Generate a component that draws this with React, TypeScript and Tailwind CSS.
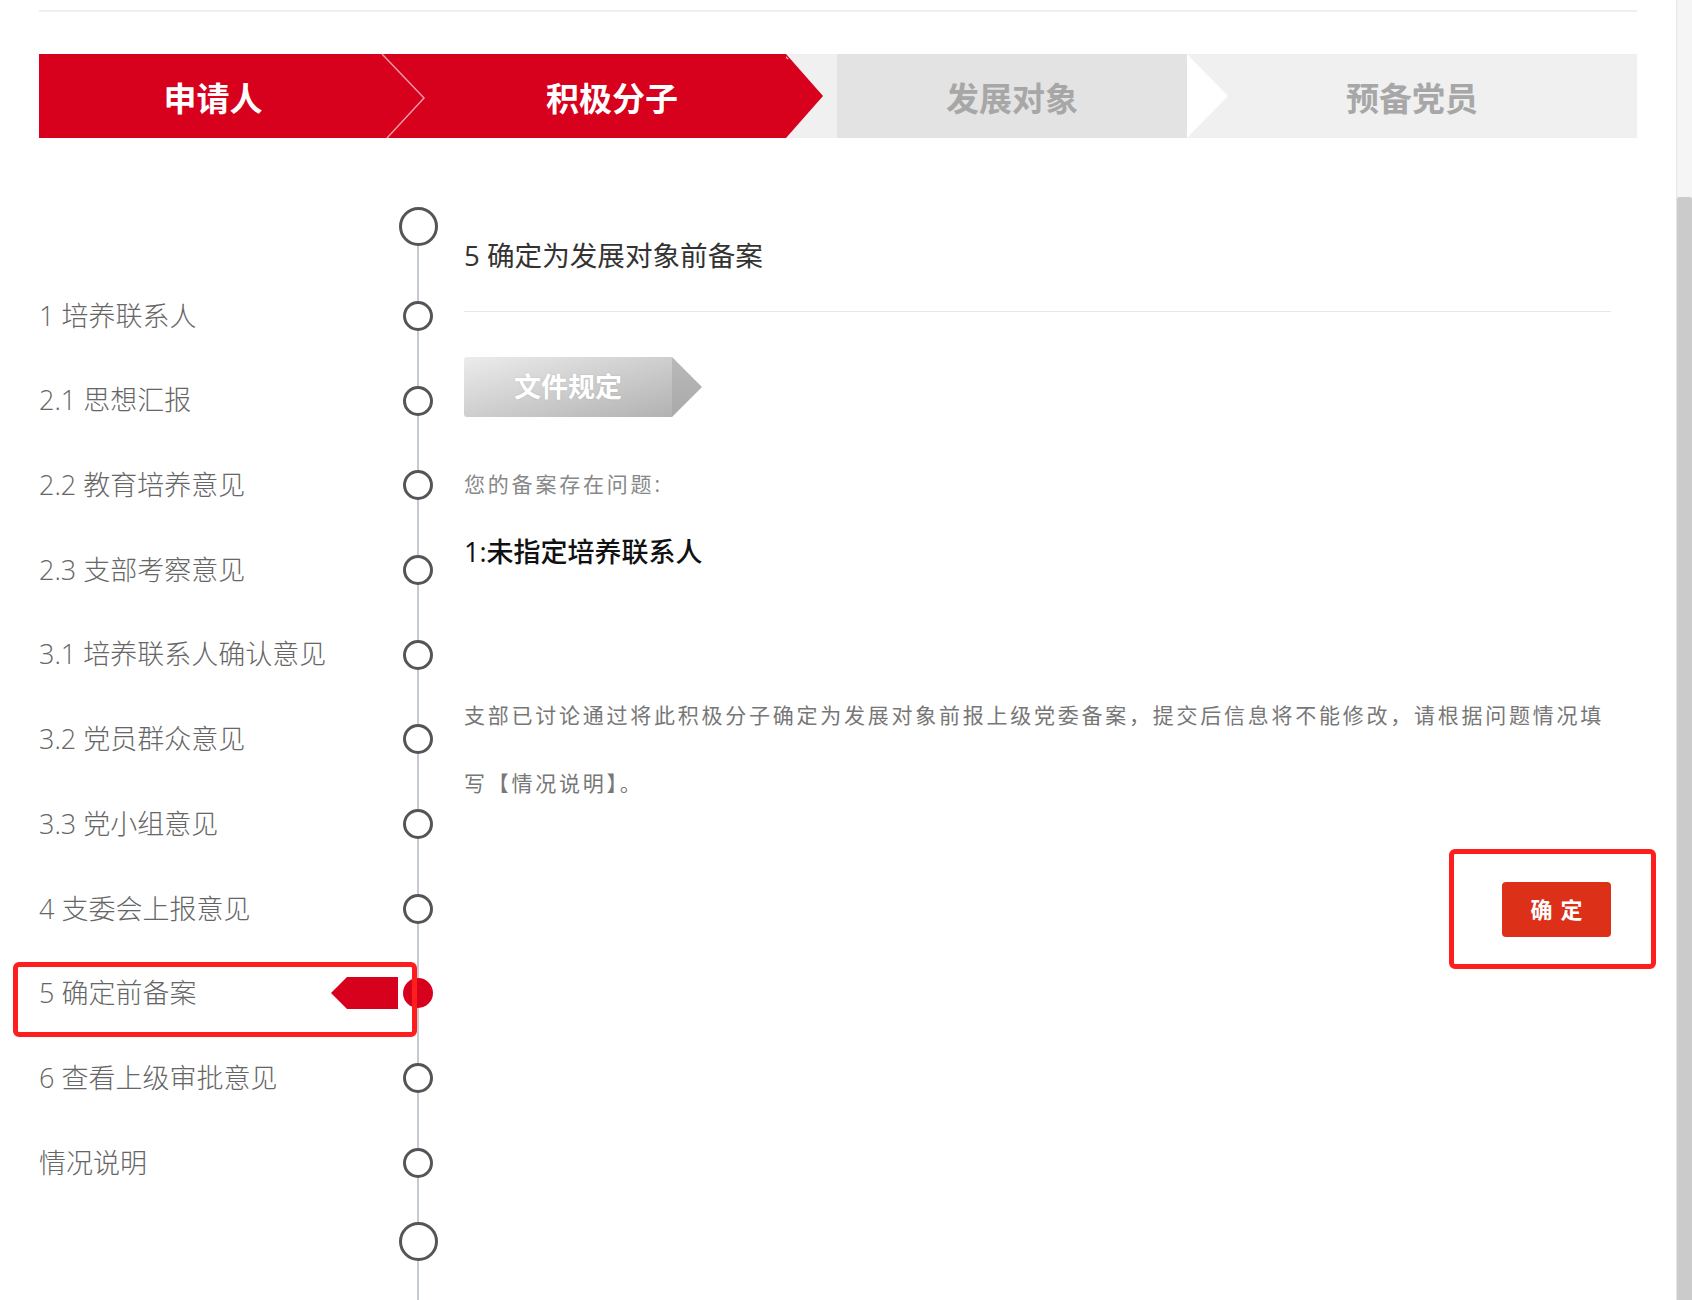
import React from "react";

const steps = [
  "1 培养联系人",
  "2.1 思想汇报",
  "2.2 教育培养意见",
  "2.3 支部考察意见",
  "3.1 培养联系人确认意见",
  "3.2 党员群众意见",
  "3.3 党小组意见",
  "4 支委会上报意见",
  "5 确定前备案",
  "6 查看上级审批意见",
  "情况说明",
];
const activeIndex = 8;

// vertical timeline stripe, drawn as a background of the circle cell
const line =
  "bg-[linear-gradient(90deg,transparent_19px,#c6cad3_19px,#c6cad3_21px,transparent_21px)]";

const StageBar = () => {
  return (
    <div className="mt-[42px] flex h-[84px] bg-[#f0f0f0] pt-[4px] text-[33px] font-bold leading-none">
      <div className="-mt-[4px] flex w-[342px] items-center justify-center bg-[#d7001d] pl-[6px] pt-[4px] text-white">
        申请人
      </div>
      <div className="relative -mt-[4px] flex w-[405px] items-center justify-center bg-[#d7001d] pl-[57px] pt-[4px] text-white">
        <svg className="absolute left-0 top-0 h-[84px] w-[46px]" viewBox="0 0 46 84">
          <polyline points="1,0 43,44 6,84" fill="none" stroke="#f29aa4" strokeWidth="1.5" />
        </svg>
        积极分子
        <svg className="absolute left-full top-0 h-[84px] w-[38px]" viewBox="0 0 38 84">
          <polygon points="0,0 37,42 0,84" fill="#d7001d" />
          <polyline points="-3,0 2,5" fill="none" stroke="#f6c3c8" strokeWidth="1.2" />
        </svg>
      </div>
      <div className="w-[51px]" />
      <div className="-mt-[4px] flex w-[350px] items-center justify-center bg-[#e3e3e3] pt-[4px] text-[#a7a7a7]">
        发展对象
      </div>
      <div className="relative -mt-[4px] flex flex-1 items-center justify-center pt-[4px] text-[#a7a7a7]">
        <svg className="absolute left-0 top-0 h-[84px] w-[42px]" viewBox="0 0 42 84">
          <polygon points="0,0 41,42 0,84" fill="#ffffff" />
        </svg>
        预备党员
      </div>
    </div>
  );
};

const Circle = ({ big = false }: { big?: boolean }) => (
  <div
    className={
      big
        ? "h-[39px] w-[39px] rounded-full border-[3px] border-[#555] bg-white"
        : "h-[30px] w-[30px] rounded-full border-[3px] border-[#555] bg-white"
    }
  />
);

const Timeline = () => {
  return (
    <div className="flex w-[399px] flex-col pt-[69px]">
      {/* top end */}
      <div className="flex h-[39px]">
        <div className="flex-1" />
        <div className="flex w-[40px] items-center justify-center">
          <Circle big />
        </div>
      </div>
      <div className="flex h-[27.65px]">
        <div className="flex-1" />
        <div className={`w-[40px] ${line}`} />
      </div>

      {steps.map((s, i) => (
        <div key={s} className="relative flex h-[84.7px]">
          <div className="flex flex-1 items-center justify-between text-[27px] font-light text-[#666]">
            <span>{s}</span>
            {i === activeIndex && (
              <svg className="h-[32px] w-[67px]" viewBox="0 0 67 32">
                <polygon points="16,0 67,0 67,32 16,32 0,16" fill="#d7001d" />
              </svg>
            )}
          </div>
          <div className={`flex w-[40px] items-center justify-center ${line}`}>
            {i === activeIndex ? (
              <div className="h-[30px] w-[30px] rounded-full bg-[#d7001d]" />
            ) : (
              <Circle />
            )}
          </div>
          {i === activeIndex && (
            <div className="pointer-events-none absolute left-[-26px] top-[11px] h-[75px] w-[404px] rounded-[6px] border-[5px] border-[#ff1e1e]" />
          )}
        </div>
      ))}

      {/* bottom end */}
      <div className="flex h-[17px]">
        <div className="flex-1" />
        <div className={`w-[40px] ${line}`} />
      </div>
      <div className="flex h-[39px]">
        <div className="flex-1" />
        <div className={`flex w-[40px] items-center justify-center ${line}`}>
          <Circle big />
        </div>
      </div>
      <div className="flex flex-1">
        <div className="flex-1" />
        <div className={`w-[40px] ${line}`} />
      </div>
    </div>
  );
};

const Content = () => {
  return (
    <div className="ml-[26px] flex w-[1147px] flex-col">
      <div className="border-b border-[#e8e8e8] pb-[36px] pt-[97px] text-[27.6px] leading-[40px] text-[#333]">
        5 确定为发展对象前备案
      </div>

      <div className="mt-[45px] flex h-[60px]">
        <div className="flex w-[208px] items-center justify-center rounded-l-[3px] bg-gradient-to-br from-[#ececec] to-[#b2b2b2] text-[27px] font-bold text-white [text-shadow:0_0_2px_rgba(0,0,0,0.12)]">
          文件规定
        </div>
        <svg className="h-[60px] w-[30px]" viewBox="0 0 30 60">
          <defs>
            <linearGradient id="tip" x1="0" y1="0" x2="0" y2="1">
              <stop offset="0" stopColor="#b9b9b9" />
              <stop offset="1" stopColor="#a9a9a9" />
            </linearGradient>
          </defs>
          <polygon points="0,0 30,30 0,60" fill="url(#tip)" />
        </svg>
      </div>

      <div className="mt-[51px] text-[21px] leading-[32px] tracking-[2.8px] text-[#888]">
        您的备案存在问题:
      </div>

      <div className="mt-[32px] text-[27px] font-medium leading-[40px] text-[#111]">
        1:未指定培养联系人
      </div>

      <p className="mt-[109px] text-[21px] leading-[68px] tracking-[2.75px] text-[#777]">
        支部已讨论通过将此积极分子确定为发展对象前报上级党委备案，提交后信息将不能修改，请根据问题情况填写【情况说明】。
      </p>

      <div className="mt-[65px] flex justify-end">
        <div className="relative">
          <button className="flex h-[55px] w-[109px] items-center justify-center rounded-[4px] bg-[#dc3019] text-[22px] font-bold tracking-[8px] text-white">
            <span className="pl-[8px]">确定</span>
          </button>
          <div className="pointer-events-none absolute bottom-[-32px] left-[-53px] right-[-45px] top-[-33px] rounded-[6px] border-[5px] border-[#ff1e1e]" />
        </div>
      </div>
    </div>
  );
};

const App = () => {
  return (
    <div className="flex h-[1300px] w-full overflow-hidden bg-white font-['Open_Sans','Noto_Sans_CJK_SC',sans-serif]">
      <div className="flex flex-1 flex-col px-[39px]">
        <div className="mt-[10px] border-b-2 border-[#efefef]" />
        <StageBar />
        <div className="flex flex-1">
          <Timeline />
          <Content />
        </div>
      </div>

      {/* scrollbar */}
      <div className="flex w-[16px] flex-col border-l border-[#e6e6e6] bg-[#f5f5f5]">
        <div className="h-[197px]" />
        <div className="flex-1 rounded-t-[2px] bg-[#cbcbcb]" />
      </div>
    </div>
  );
};

export default App;
